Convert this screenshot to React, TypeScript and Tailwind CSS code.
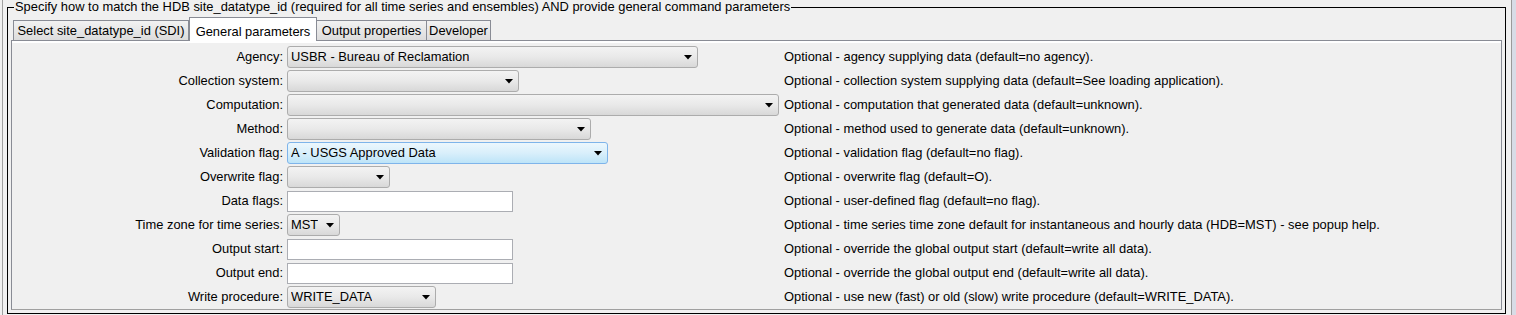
import React from "react";
import clsx from "clsx";

type Row = {
  label: string;
  kind: "combo" | "text";
  width: string;
  value?: string;
  active?: boolean;
  desc: string;
};

const rows: Row[] = [
  {
    label: "Agency:",
    kind: "combo",
    width: "w-[411px]",
    value: "USBR - Bureau of Reclamation",
    desc: "Optional - agency supplying data (default=no agency).",
  },
  {
    label: "Collection system:",
    kind: "combo",
    width: "w-[232px]",
    desc: "Optional - collection system supplying data (default=See loading application).",
  },
  {
    label: "Computation:",
    kind: "combo",
    width: "w-[492px]",
    desc: "Optional - computation that generated data (default=unknown).",
  },
  {
    label: "Method:",
    kind: "combo",
    width: "w-[304px]",
    desc: "Optional - method used to generate data (default=unknown).",
  },
  {
    label: "Validation flag:",
    kind: "combo",
    width: "w-[321px]",
    value: "A - USGS Approved Data",
    active: true,
    desc: "Optional - validation flag (default=no flag).",
  },
  {
    label: "Overwrite flag:",
    kind: "combo",
    width: "w-[103px]",
    desc: "Optional - overwrite flag (default=O).",
  },
  {
    label: "Data flags:",
    kind: "text",
    width: "w-[226px]",
    desc: "Optional - user-defined flag (default=no flag).",
  },
  {
    label: "Time zone for time series:",
    kind: "combo",
    width: "w-[53px]",
    value: "MST",
    desc: "Optional - time series time zone default for instantaneous and hourly data (HDB=MST) - see popup help.",
  },
  {
    label: "Output start:",
    kind: "text",
    width: "w-[226px]",
    desc: "Optional - override the global output start (default=write all data).",
  },
  {
    label: "Output end:",
    kind: "text",
    width: "w-[226px]",
    desc: "Optional - override the global output end (default=write all data).",
  },
  {
    label: "Write procedure:",
    kind: "combo",
    width: "w-[149px]",
    value: "WRITE_DATA",
    desc: "Optional - use new (fast) or old (slow) write procedure (default=WRITE_DATA).",
  },
];

const tabs = [
  { name: "Select site_datatype_id (SDI)", width: "w-[176px]" },
  { name: "General parameters", width: "w-[128px]", selected: true },
  { name: "Output properties", width: "w-[111px]" },
  { name: "Developer", width: "w-[65px]" },
];

function Arrow() {
  return (
    <svg width="8" height="5" viewBox="0 0 8 5" className="shrink-0">
      <path d="M0 0 H8 L4 4.5 Z" fill="#000" />
    </svg>
  );
}

function Combo({ row }: { row: Row }) {
  return (
    <div
      className={clsx(
        "flex h-[22px] items-center justify-between rounded-[3px] border pr-[5px] pl-[3px]",
        row.width,
        row.active
          ? "border-[#7eb4ea] bg-linear-to-b from-[#ecf7fd] via-[#d9effb] to-[#bde4f8]"
          : "border-[#acacac] bg-linear-to-b from-[#f3f3f3] via-[#e9e9e9] to-[#d8d8d8]"
      )}
    >
      <span className="truncate">{row.value}</span>
      <Arrow />
    </div>
  );
}

function TextField({ row }: { row: Row }) {
  return (
    <div
      className={clsx("h-[21px] border border-[#abadb3] bg-white", row.width)}
    />
  );
}

export default function App() {
  return (
    <div className="flex h-[315px] w-[1516px] overflow-hidden bg-[#f0f0f0] font-['Liberation_Sans',Arial,sans-serif] text-[12.9px] text-black">
      {/* left edge */}
      <div className="ml-[2px] w-px bg-[#a0a0a0]" />

      <fieldset className="mt-0 ml-[4px] h-[314px] w-[1499px] border border-black px-[3px] pb-[3px]">
        <legend className="ml-[3px] px-px leading-[14px] whitespace-nowrap">
          Specify how to match the HDB site_datatype_id (required for all time
          series and ensembles) AND provide general command parameters
        </legend>

        {/* tabs */}
        <div className="flex h-[26px] items-end pl-[2px]">
          {tabs.map((t) =>
            t.selected ? (
              <div
                key={t.name}
                className={clsx(
                  "relative z-10 -mb-px flex h-[24px] items-start justify-center border border-b-0 border-[#898c95] bg-white pt-[4px] whitespace-nowrap",
                  t.width
                )}
              >
                {t.name}
              </div>
            ) : (
              <div
                key={t.name}
                className={clsx(
                  "-ml-px flex h-[20px] items-center justify-center border border-b-0 border-[#898c95] bg-linear-to-b from-[#f2f2f2] to-[#dcdcdc] pt-px whitespace-nowrap first:ml-0",
                  t.width
                )}
              >
                {t.name}
              </div>
            )
          )}
        </div>

        {/* tab panel */}
        <div className="flex h-[270px] flex-col border border-[#898c95] border-b-[#a0a0a0] bg-[#f0f0f0]">
          <div className="h-[2px] shrink-0 bg-white" />
          <div className="flex flex-col pt-[2px]">
            {rows.map((r) => (
              <div key={r.label} className="flex h-[24px] shrink-0 items-center">
                <div className="w-[275px] pr-[4px] text-right whitespace-nowrap">
                  {r.label}
                </div>
                <div className="w-[492px]">
                  {r.kind === "combo" ? <Combo row={r} /> : <TextField row={r} />}
                </div>
                <div className="ml-[5px] whitespace-nowrap">{r.desc}</div>
              </div>
            ))}
          </div>
        </div>
      </fieldset>

      {/* right edge */}
      <div className="ml-[5px] w-px bg-[#9a9a9a]" />
      <div className="flex-1 bg-[#d8dce6]" />
    </div>
  );
}
